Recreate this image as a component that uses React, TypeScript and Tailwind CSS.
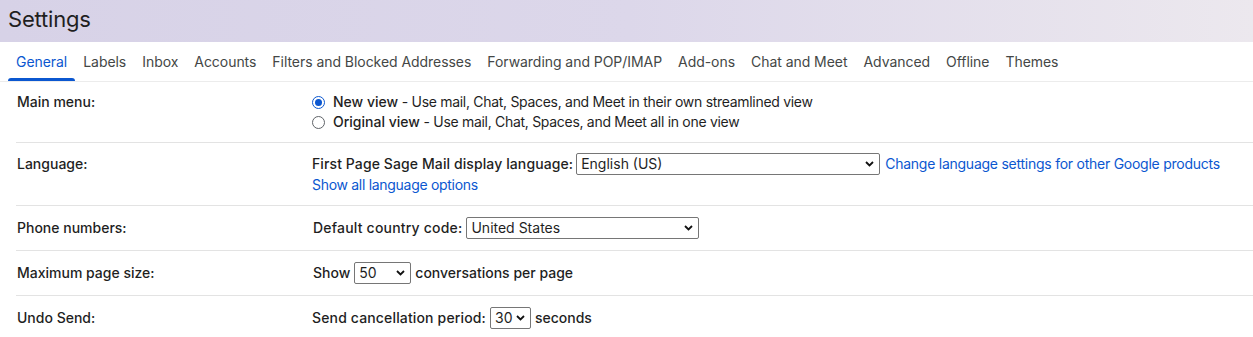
const tabs = [
  "General",
  "Labels",
  "Inbox",
  "Accounts",
  "Filters and Blocked Addresses",
  "Forwarding and POP/IMAP",
  "Add-ons",
  "Chat and Meet",
  "Advanced",
  "Offline",
  "Themes",
];

function Radio({ checked }: { checked?: boolean }) {
  return checked ? (
    <span className="w-[13px] h-[13px] rounded-full border-[1.5px] border-[#0b57d0] flex items-center justify-center shrink-0">
      <span className="w-[7px] h-[7px] rounded-full bg-[#0b57d0]" />
    </span>
  ) : (
    <span className="w-[13px] h-[13px] rounded-full border border-[#5f6368] bg-white shrink-0" />
  );
}

function Select({ value, width }: { value: string; width: string }) {
  return (
    <span className={`relative inline-flex ${width} h-[22px] shrink-0`}>
      <select
        defaultValue={value}
        className="appearance-none w-full h-full border border-[#767676] rounded-[2px] bg-white text-sm text-[#1f1f1f] pl-[4px] pr-4 outline-none"
      >
        <option>{value}</option>
      </select>
      <svg
        className="absolute right-[6px] top-[8px] pointer-events-none"
        width="9"
        height="6"
        viewBox="0 0 9 6"
      >
        <path d="M1 1l3.5 3.5L8 1" fill="none" stroke="#111" strokeWidth="1.8" />
      </svg>
    </span>
  );
}

export default function App() {
  return (
    <div className="w-[1253px] h-[337px] overflow-hidden bg-white text-sm text-[#1f1f1f] font-['Inter',sans-serif]">
      <div className="h-[42px] bg-gradient-to-r from-[#d7d2e7] via-[#dcd7ea] to-[#ece8ee] flex items-center px-2">
        <h1 className="text-[22px] text-[#1f1f1f] leading-none pb-[4px] tracking-[-0.2px]">Settings</h1>
      </div>

      <div className="flex px-2 h-[40px] border-b border-[#ececec]">
        {tabs.map((t, i) => (
          <div
            key={t}
            className={`px-2 flex items-center relative tracking-[-0.05px] ${i === 0 ? "text-[#0b57d0]" : "text-[#444746]"}`}
          >
            {t}
            {i === 0 && (
              <span className="absolute left-0 right-0 bottom-0 h-[3px] bg-[#0b57d0] rounded-t-sm" />
            )}
          </div>
        ))}
      </div>

      <div className="pl-4">
        <div className="grid grid-cols-[296px_1fr] border-b border-[#e3e3e3] pt-[10px] pb-[10px]">
          <div className="pl-px font-medium leading-5">Main menu:</div>
          <div className="flex flex-col">
            <div className="flex items-center gap-2 h-5">
              <Radio checked />
              <span>
                <span className="font-medium">New view</span>
                <span className="tracking-[-0.3px]"> - Use mail, Chat, Spaces, and Meet in their own streamlined view</span>
              </span>
            </div>
            <div className="flex items-center gap-2 h-5">
              <Radio />
              <span>
                <span className="font-medium">Original view</span>
                <span className="tracking-[-0.3px]"> - Use mail, Chat, Spaces, and Meet all in one view</span>
              </span>
            </div>
          </div>
        </div>

        <div className="grid grid-cols-[296px_1fr] border-b border-[#e3e3e3] pt-[10px] pb-[10px]">
          <div className="pl-px font-medium leading-[22px]">Language:</div>
          <div className="flex flex-col">
            <div className="flex items-center gap-[3px] h-[22px]">
              <span className="font-medium tracking-[0.1px]">First Page Sage Mail display language:</span>
              <Select value="English (US)" width="w-[304px]" />
              <a className="text-[#0b57d0] ml-[2px] tracking-[-0.25px]">Change language settings for other Google products</a>
            </div>
            <a className="text-[#0b57d0] leading-5 tracking-[-0.3px]">Show all language options</a>
          </div>
        </div>

        <div className="grid grid-cols-[296px_1fr] border-b border-[#e3e3e3] py-[11px]">
          <div className="pl-px font-medium leading-[22px]">Phone numbers:</div>
          <div className="flex items-center gap-[4px] h-[22px] pl-px">
            <span className="font-medium tracking-[0.2px]">Default country code:</span>
            <Select value="United States" width="w-[233px]" />
          </div>
        </div>

        <div className="grid grid-cols-[296px_1fr] border-b border-[#e3e3e3] py-[11px]">
          <div className="pl-px font-medium leading-[22px]">Maximum page size:</div>
          <div className="flex items-center gap-[4px] h-[22px] pl-px">
            <span className="font-medium">Show</span>
            <Select value="50" width="w-[57px]" />
            <span className="font-medium">conversations per page</span>
          </div>
        </div>

        <div className="grid grid-cols-[296px_1fr] py-[11px]">
          <div className="pl-px font-medium leading-[22px]">Undo Send:</div>
          <div className="flex items-center gap-[4px] h-[22px]">
            <span className="font-medium tracking-[0.15px]">Send cancellation period:</span>
            <Select value="30" width="w-[41px]" />
            <span className="font-medium">seconds</span>
          </div>
        </div>
      </div>
    </div>
  );
}
